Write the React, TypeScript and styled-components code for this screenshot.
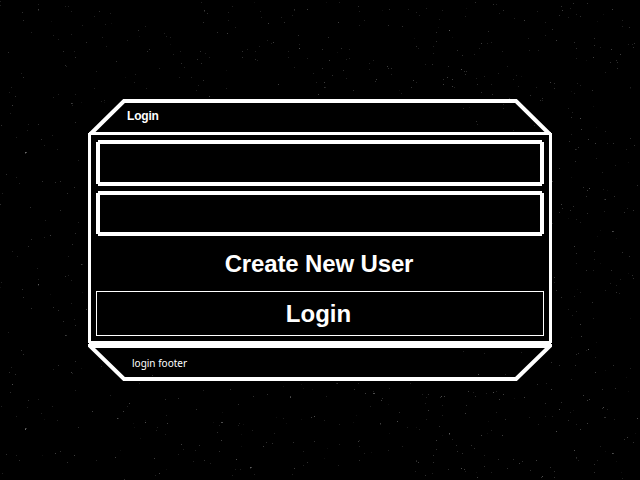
import React from 'react';
import styled, { createGlobalStyle } from 'styled-components';

const GlobalStyle = createGlobalStyle`
  * { box-sizing: border-box; }
  html, body { margin: 0; background: #000; overflow: hidden; }
`;

/* Each field lists stars as x, y, brightness (0-9), relative to its origin. */
const fields = [
  {
    x: 0, y: 0,
    stars: '0 1 2,0 5 2,38 4 2,38 9 4,38 10 2,22 12 3,23 20 3,31 32 2,65 6 2,68 6 2,71 11 2,94 16 2,99 11 3,110 13 2,51 21 1,82 25 2,105 24 2,111 23 1,53 35 2,58 39 2,71 34 2,86 42 3,102 37 2,106 46 2,8 52 3,63 51 3,74 51 2,75 57 3,65 65 3,66 66 2,21 73 2,23 77 3,96 71 2,116 61 3,145 26 2,138 30 3,139 36 1,127 40 2,149 49 3,147 51 3,164 33 2,166 36 2,170 37 2,170 44 1,173 54 2,180 51 2,159 68 2,181 63 3,184 67 2,197 59 3,201 63 3,200 51 3,205 53 2,209 57 2,201 2 2,204 10 4,204 11 2,207 13 3,203 22 3,217 32 3,227 33 4,228 12 2,228 20 2,232 6 2,235 27 2,254 2 1,260 11 2,261 17 2,268 23 4,281 17 2,284 22 3,294 9 3,294 10 2,307 9 4,292 15 2,298 35 3,299 44 2,299 48 5,273 42 4,267 40 2,271 43 2,259 46 2,247 49 2,242 51 3,242 57 3,255 51 2,255 59 3,257 60 2,288 51 2,288 57 2,307 58 2,294 67 2,313 73 2,316 82 2,278 84 4,318 94 4,203 80 3,191 77 2,179 77 2,198 85 2,196 90 2,209 96 4,226 70 1,226 88 2,135 74 2,134 82 2,125 77 1,146 88 2,94 88 2,75 94 2,58 94 2,53 97 2,11 87 2,9 92 2,15 96 3',
  },
  {
    x: 320, y: 0,
    stars: '6 2 1,19 2 2,38 6 3,39 11 2,18 22 4,39 25 2,44 20 2,62 10 1,69 9 3,88 9 2,68 25 3,82 26 3,96 12 2,99 15 2,106 8 2,122 10 2,119 19 2,129 30 6,116 32 3,116 41 3,113 46 2,113 53 2,96 46 3,98 48 2,94 38 1,118 27 1,132 37 1,137 50 3,142 55 3,155 2 3,173 4 3,176 4 2,183 10 3,179 13 2,194 18 2,204 20 4,145 16 2,146 8 1,168 31 3,161 43 4,167 43 2,171 42 2,154 54 2,159 48 2,182 51 2,209 50 2,218 50 2,208 38 2,225 22 2,225 35 2,232 29 3,236 40 4,217 11 2,239 15 3,241 6 3,242 10 4,253 3 3,250 8 2,256 14 2,260 16 3,267 3 3,248 17 2,292 9 4,283 14 1,302 20 2,302 26 2,309 27 3,277 21 1,274 38 3,274 45 3,254 42 3,256 48 3,256 58 2,280 47 2,291 49 4,300 54 4,313 47 3,314 43 3,312 44 2,308 44 2,296 60 3,297 62 3,290 62 3,273 57 4,297 68 3,285 72 2,266 60 1,8 37 3,2 49 3,21 48 3,17 52 1,29 49 2,26 59 2,29 58 2,9 60 4,2 68 3,23 70 3,12 75 3,4 82 4,4 87 3,5 87 2,26 78 2,33 90 3,53 60 2,49 63 2,49 69 2,67 66 4,68 68 3,71 68 3,71 74 2,56 79 4,55 81 3,93 80 4,96 82 2,91 87 3,81 93 2,79 90 1,105 64 2,112 64 3,128 66 3,141 69 5,144 71 3,146 71 3,145 74 3,127 77 4,132 79 4,123 79 3,123 84 4,132 86 4,134 87 2,157 84 3,161 92 3,164 76 2,178 73 2,172 94 3,189 98 3,187 66 2,171 84 2,156 78 2,193 79 2,196 75 2,201 76 1,198 86 2,216 87 2,210 95 3,222 98 3,230 82 4,234 83 3,234 88 3,251 91 1,254 93 2,257 83 2,260 85 2,272 90 3,310 87 2,310 88 1',
  },
  {
    x: 0, y: 380,
    stars: '12 4 5,10 12 3,28 20 3,27 27 2,38 19 2,1 26 2,16 36 2,41 33 2,44 39 1,52 26 2,57 40 2,75 10 2,92 31 4,78 47 3,25 48 5,25 49 7,26 48 3,6 74 3,16 75 2,19 80 3,42 75 1,55 73 4,60 71 3,67 82 3,74 75 4,96 80 2,2 93 2,110 15 2,129 23 4,127 26 2,123 31 4,117 38 5,118 38 2,133 43 1,145 42 5,145 40 1,134 47 1,157 47 2,156 50 2,140 58 1,120 70 1,115 77 4,154 78 4,159 93 4,155 95 2,124 99 3,165 19 3,178 18 3,203 10 2,196 29 3,166 35 2,167 43 4,165 54 2,139 3 1,230 9 3,253 16 3,267 14 3,290 16 4,290 17 5,222 32 1,238 24 3,221 42 5,222 42 5,213 42 1,219 45 2,239 43 2,238 45 2,243 44 1,217 52 3,221 60 4,241 54 1,241 66 1,252 50 2,274 53 2,266 62 3,263 66 4,272 63 3,293 62 3,314 61 3,276 37 1,283 38 2,286 43 1,301 39 1,311 37 4,314 36 5,181 64 4,183 69 2,199 65 3,195 70 2,178 74 2,219 71 3,204 80 3,193 81 2,210 83 2,236 79 5,250 87 6,251 87 4,250 88 2,235 89 2,240 89 2,232 95 2,254 94 2,294 88 4,292 94 2,303 85 2,307 82 3,303 71 2,166 89 1,301 4 1,303 8 1,312 9 1,283 6 1',
  },
  {
    x: 320, y: 380,
    stars: '17 3 3,16 3 2,38 3 2,90 3 2,34 9 3,6 16 2,45 13 4,53 13 5,54 13 5,53 11 2,62 18 3,61 20 4,50 26 2,69 8 2,68 24 1,102 14 2,108 14 3,106 17 2,108 30 4,121 16 5,120 17 3,124 16 4,105 23 2,122 25 2,148 11 4,153 12 2,155 16 3,166 13 2,173 12 5,176 11 2,183 14 4,179 19 4,194 18 1,204 17 4,146 25 3,145 33 4,122 35 2,106 39 2,119 46 3,129 53 6,129 54 3,122 55 1,132 59 2,116 60 4,116 69 3,113 75 3,113 82 3,136 65 3,137 71 3,142 73 3,151 65 3,154 68 3,161 55 4,167 53 1,171 50 2,182 55 4,185 39 3,176 32 2,168 41 1,231 9 4,217 4 3,226 3 2,225 23 3,241 22 3,239 29 5,250 32 2,253 30 1,263 15 4,267 20 4,269 19 4,282 9 3,295 8 3,283 27 5,282 28 3,287 29 2,284 37 3,285 37 3,294 39 2,308 11 1,317 38 5,225 36 2,232 36 2,248 40 3,256 44 2,267 43 4,260 49 4,236 51 5,218 44 2,209 37 2,4 40 2,19 44 2,36 35 1,33 42 1,60 43 4,60 44 2,77 41 5,79 32 3,87 47 2,99 49 2,96 47 1,38 61 4,39 60 2,39 66 2,19 64 2,7 68 1,18 85 2,4 78 1,44 73 2,39 80 3,51 72 1,69 53 1,68 70 2,82 66 2,96 80 2,98 82 4,96 81 3,95 91 2,105 95 3,112 93 2,128 89 3,141 88 5,144 89 4,145 91 2,157 97 4,164 75 2,164 86 3,171 92 2,156 92 1,178 79 3,193 79 3,199 83 4,202 81 3,187 88 3,216 80 4,210 90 3,222 96 5,221 97 3,230 87 3,234 91 3,234 97 3,254 70 5,256 77 3,256 78 2,258 80 2,277 80 2,274 84 3,274 92 3,285 71 1,292 73 5,293 73 4,280 66 2,296 81 1,307 57 4,304 59 3,313 62 3,315 53 1,302 98 2,301 92 1',
  },
  {
    x: 0, y: 100,
    stars: '12 5 4,10 13 2,28 24 2,27 30 2,38 24 3,1 25 3,16 37 2,41 39 3,44 45 2,52 35 2,57 49 2,75 22 3,71 3 4,72 3 3,72 5 2,81 2 1,78 60 2,25 52 7,26 52 5,25 53 3,6 74 3,16 77 2,19 83 2,42 81 3,55 82 3,60 81 3,67 93 3,74 87 3,2 93 2,0 104 3,30 107 3,60 110 3,45 120 2,31 139 3,44 137 2,50 135 4,28 146 3,12 151 2,17 156 2,75 133 3,72 144 3,68 156 2,78 122 2,81 164 4,82 164 2,37 168 2,38 179 2,38 184 6,38 185 2,1 182 2,0 187 1,22 189 3,23 197 3,50 194 1,31 208 3,53 207 3,58 210 3,65 176 3,68 175 2,71 180 2,82 192 1,71 203 2,86 209 4,63 221 3,74 219 2,75 225 3,65 235 4,66 235 3,8 232 2,21 250 3,23 254 3,11 267 2,9 272 3,15 274 3,53 269 2,58 265 3,71 272 4,72 273 2,75 261 3,81 268 1',
  },
  {
    x: 550, y: 100,
    stars: '18 8 2,22 12 2,21 17 3,30 18 5,31 29 4,43 6 1,46 27 1,55 31 2,21 34 2,19 41 3,25 49 3,26 49 2,28 47 3,38 39 4,45 43 4,57 43 2,63 43 3,80 38 3,84 45 3,76 49 2,46 58 2,25 61 3,65 65 2,78 62 1,9 68 3,2 81 4,21 77 1,52 72 2,33 87 3,39 88 5,37 90 4,53 89 2,36 96 3,57 90 1,64 96 3,55 99 4,54 99 2,87 85 3,11 104 4,12 108 3,23 106 3,20 110 3,9 112 3,37 113 3,54 111 2,77 108 2,83 110 3,74 112 3,18 118 1,26 119 2,30 122 2,2 123 2,62 131 5,63 131 4,50 130 1,66 138 1,47 136 1,24 146 4,26 153 3,26 163 2,44 151 3,44 159 2,50 163 1,36 170 3,43 170 2,61 170 3,72 152 3,79 156 3,78 173 1,82 175 3,83 178 3,70 179 2,66 185 2,60 183 2,55 190 2,66 192 3,69 193 2,4 177 3,4 182 2,6 190 3,11 197 3,27 189 1,30 192 2,24 196 2,42 202 3,18 209 2,22 215 2,26 211 2,43 218 2,80 218 1,30 224 4,31 236 4,21 237 1,38 249 6,36 250 2,46 242 1,26 254 3,28 253 3,45 257 2,25 265 3,9 265 3,63 265 3,80 268 2,45 272 4,1 262 3,55 270 1,76 277 1,21 279 2',
  },
  {
    x: 91, y: 100,
    stars: '10 1 2,13 2 1,13 0 2',
  },
  {
    x: 460, y: 100,
    stars: '3 8 2,9 7 1,16 21 3,17 24 2,43 4 2,43 8 2,53 30 2,74 25 2,80 0 3,82 0 2',
  },
  {
    x: 460, y: 344,
    stars: '3 7 2,24 9 2,61 8 2,18 30 5,45 30 2',
  },
  {
    x: 91, y: 344,
    stars: '10 22 2,61 31 3,48 39 1',
  },
].map(({ x, y, stars }) => ({
  x,
  y,
  stars: stars.split(',').map((s) => s.split(' ').map(Number)),
}));

const Screen = styled.main`
  position: relative;
  width: 640px;
  height: 480px;
  display: flex;
  flex-direction: column;
  align-items: center;
  padding-top: 99px;
  background: #000;
  color: #fff;
  font-family: 'Liberation Sans', Arial, sans-serif;
`;

const Sky = styled.svg`
  position: absolute;
  inset: 0;
  shape-rendering: crispEdges;
`;

const Panel = styled.section`
  position: relative;
  width: 464px;
  display: flex;
  flex-direction: column;
`;

const CapFrame = styled.svg`
  position: absolute;
  inset: 0;
  fill: none;
  stroke: #fff;
  stroke-width: 4;
`;

const Header = styled.header`
  position: relative;
  height: 33px;
  padding: 10px 0 0 39px;
  font-size: 12px;
  line-height: 14px;
  font-weight: 700;
  letter-spacing: -0.2px;
`;

const Title = styled.span`
  position: relative;
`;

const Body = styled.form`
  display: flex;
  flex-direction: column;
  gap: 5px;
  height: 212px;
  padding: 5px;
  border: 3px solid #fff;
  background: #000;
  clip-path: polygon(
    1px 0, calc(100% - 1px) 0, calc(100% - 1px) 1px, 100% 1px,
    100% calc(100% - 1px), calc(100% - 1px) calc(100% - 1px), calc(100% - 1px) 100%,
    1px 100%, 1px calc(100% - 1px), 0 calc(100% - 1px), 0 1px, 1px 1px
  );
`;

const Field = styled.input<{ $height: number }>`
  width: 448px;
  height: ${({ $height }) => $height}px;
  padding: 0 12px;
  border: 4px solid #fff;
  border-radius: 0;
  outline: none;
  background: #000;
  color: #fff;
  font: 700 20px 'Liberation Sans', Arial, sans-serif;
  clip-path: polygon(
    2px 0, calc(100% - 2px) 0, calc(100% - 2px) 2px, 100% 2px,
    100% calc(100% - 2px), calc(100% - 2px) calc(100% - 2px), calc(100% - 2px) 100%,
    2px 100%, 2px calc(100% - 2px), 0 calc(100% - 2px), 0 2px, 2px 2px
  );
`;

const Button = styled.button<{ $outlined?: boolean }>`
  width: 448px;
  height: 45px;
  padding: 0 ${({ $outlined }) => ($outlined ? 3 : 2)}px 0 0;
  border: 1px solid ${({ $outlined }) => ($outlined ? '#fff' : 'transparent')};
  background: #000;
  color: #fff;
  font: 700 24px/43px 'Liberation Sans', Arial, sans-serif;
  letter-spacing: ${({ $outlined }) => ($outlined ? 0 : -0.14)}px;
  text-align: center;
`;

const Footer = styled.footer`
  position: relative;
  height: 37px;
  padding: 12px 0 0 44px;
  font: 10px/14px 'Noto Sans', sans-serif;
`;

export default function App() {
  return (
    <>
      <GlobalStyle />
      <Screen>
        <Sky width="640" height="480" aria-hidden="true">
          {fields.map((field) => (
            <g key={`${field.x}-${field.y}`} transform={`translate(${field.x} ${field.y})`}>
              {field.stars.map(([x, y, level], i) => (
                <rect key={i} x={x} y={y} width="1" height="1" fill="#fff" opacity={level * 0.06} />
              ))}
            </g>
          ))}
        </Sky>
        <Panel>
          <Header>
            <CapFrame width="464" height="37" aria-hidden="true">
              <path d="M2.5 35 L36 2 H428 L461.500 35" />
            </CapFrame>
            <Title>Login</Title>
          </Header>
          <Body onSubmit={(e) => e.preventDefault()}>
            <Field $height={46} type="text" aria-label="Username" />
            <Field $height={45} type="password" aria-label="Password" />
            <Button type="button">Create New User</Button>
            <Button type="submit" $outlined>Login</Button>
          </Body>
          <Footer>
            <CapFrame width="464" height="37" aria-hidden="true">
              <path d="M428 35 L462 2 H2 L36 35 Z" />
            </CapFrame>
            <Title>login footer</Title>
          </Footer>
        </Panel>
      </Screen>
    </>
  );
}
